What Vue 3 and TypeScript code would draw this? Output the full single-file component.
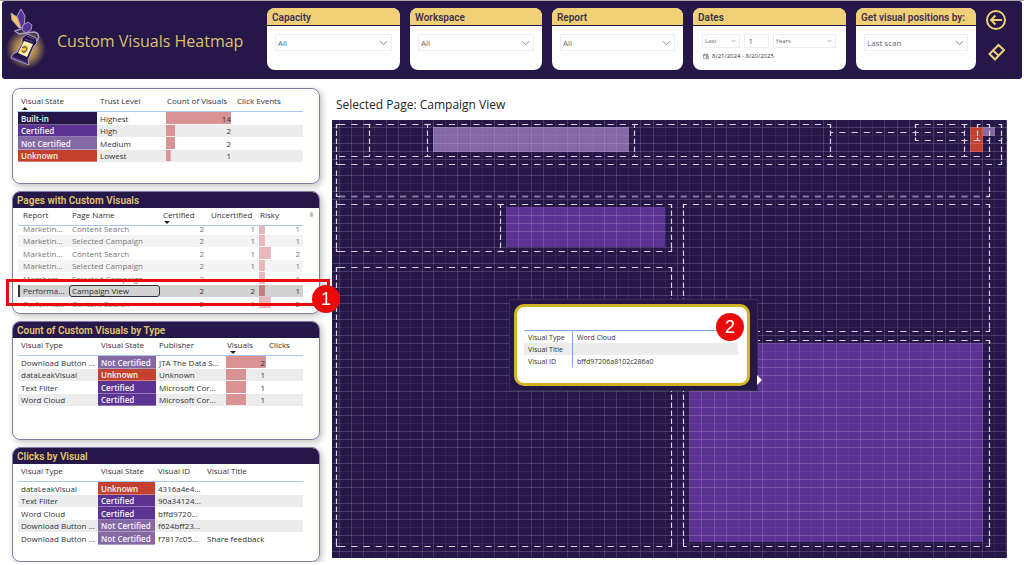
<script setup lang="ts">
import { onMounted } from 'vue'

type Kind = 'text' | 'state' | 'bar' | 'num'
interface Col { label: string; width: number; kind?: Kind; sort?: 'asc' | 'desc'; full?: number; max?: number }
interface Panel { id: string; title?: string; cols: Col[]; rows: string[][]; selected?: number }

const panels: Panel[] = [
  {
    id: 'states',
    cols: [
      { label: 'Visual State', width: 79, kind: 'state', sort: 'asc' },
      { label: 'Trust Level', width: 69 },
      { label: 'Count of Visuals', width: 68, kind: 'bar', full: 96, max: 14 },
      { label: 'Click Events', width: 69 },
    ],
    rows: [
      ['Built-in', 'Highest', '14', ''],
      ['Certified', 'High', '2', ''],
      ['Not Certified', 'Medium', '2', ''],
      ['Unknown', 'Lowest', '1', ''],
    ],
  },
  {
    id: 'pages',
    title: 'Pages with Custom Visuals',
    selected: 5,
    cols: [
      { label: 'Report', width: 51 },
      { label: 'Page Name', width: 91 },
      { label: 'Certified', width: 48, kind: 'num', sort: 'desc' },
      { label: 'Uncertified', width: 51, kind: 'num' },
      { label: 'Risky', width: 44, kind: 'bar', full: 27, max: 2 },
    ],
    rows: [
      ['Marketin...', 'Content Search', '2', '1', '1'],
      ['Marketin...', 'Selected Campaign', '2', '1', '1'],
      ['Marketin...', 'Content Search', '2', '1', '2'],
      ['Marketin...', 'Selected Campaign', '2', '1', '1'],
      ['Members ...', 'Selected Campaign', '2', '', '1'],
      ['Performa...', 'Campaign View', '2', '2', '1'],
      ['Performa...', 'Content Search', '2', '1', '2'],
    ],
  },
  {
    id: 'types',
    title: 'Count of Custom Visuals by Type',
    cols: [
      { label: 'Visual Type', width: 80 },
      { label: 'Visual State', width: 58, kind: 'state' },
      { label: 'Publisher', width: 70 },
      { label: 'Visuals', width: 40, kind: 'bar', full: 100, max: 2, sort: 'desc' },
      { label: 'Clicks', width: 37 },
    ],
    rows: [
      ['Download Button ...', 'Not Certified', 'JTA The Data S...', '2', ''],
      ['dataLeakVisual', 'Unknown', 'Unknown', '1', ''],
      ['Text Filter', 'Certified', 'Microsoft Cor...', '1', ''],
      ['Word Cloud', 'Certified', 'Microsoft Cor...', '1', ''],
    ],
  },
  {
    id: 'clicks',
    title: 'Clicks by Visual',
    cols: [
      { label: 'Visual Type', width: 80 },
      { label: 'Visual State', width: 57, kind: 'state' },
      { label: 'Visual ID', width: 49 },
      { label: 'Visual Title', width: 99 },
    ],
    rows: [
      ['dataLeakVisual', 'Unknown', '4316a4e4...', ''],
      ['Text Filter', 'Certified', '90a34124...', ''],
      ['Word Cloud', 'Certified', 'bffd9720...', ''],
      ['Download Button ...', 'Not Certified', 'f624bff23...', ''],
      ['Download Button ...', 'Not Certified', 'f7817c05...', 'Share feedback'],
    ],
  },
]

const filters = [
  { id: 'capacity', label: 'Capacity', value: 'All' },
  { id: 'workspace', label: 'Workspace', value: 'All' },
  { id: 'report', label: 'Report', value: 'All' },
]

const colWidth = (p: Panel, c: Col) => (c.width / p.cols.reduce((s, k) => s + k.width, 0)) * 100 + '%'
const slug = (s: string) => s.toLowerCase().replace(' ', '-')
const barStyle = (c: Col, v: string) =>
  c.kind === 'bar' ? { backgroundSize: `${(Number(v) / (c.max ?? 1)) * (c.full ?? 100)}% calc(100% - 1px)` } : undefined

/* Heatmap grid, in canvas units */
const vLines = Array.from({ length: 56 }, (_, i) => Math.round(i < 8 ? 7 + i * 11.8 : 101 + (i - 8) * 12.2) + 0.5)
const hLines = Array.from({ length: 54 }, (_, i) => 7.5 + i * 8)
const vDim = (i: number) => [3, 6, 9, 12, 14].includes(i % 15)
const hDim = (i: number) => [1, 5, 7].includes(i % 9)

const blocks = [
  { x: 101, y: 7, w: 196, h: 25, c: '#8469a5' },
  { x: 638, y: 7, w: 13, h: 25, c: '#c4412f' },
  { x: 651, y: 7, w: 12, h: 9, c: '#8469a5' },
  { x: 174, y: 87, w: 159, h: 40, c: '#5c3292' },
  { x: 357, y: 223, w: 294, h: 199, c: '#5c3292' },
]

/* Dashed outlines: [x1, x2, y] and [y1, y2, x] */
const hDash = [
  [5, 498, 4], [584, 632, 4], [498, 632, 12], [584, 645, 20], [5, 657, 36], [5, 669, 44],
  [5, 657, 76], [5, 339, 84], [351, 657, 84], [5, 339, 131], [5, 339, 147],
  [351, 657, 211], [351, 657, 220], [5, 339, 426], [351, 657, 426],
]
const vDash = [
  [4, 44, 4], [50, 76, 4], [4, 36, 37], [4, 36, 95], [4, 36, 302], [4, 36, 498], [4, 20, 583],
  [4, 36, 632], [4, 20, 645], [4, 36, 657], [4, 44, 669], [50, 76, 657],
  [84, 131, 4], [84, 131, 168], [84, 131, 339], [147, 426, 4], [147, 426, 339],
  [84, 211, 351], [84, 211, 657], [220, 426, 351], [220, 426, 657],
]
const corners = [
  'M4 8V4h3', 'M4 80v4m0 0h3', 'M92 4h6', 'M35 4h3', 'M495 4h3v3', 'M583 7V4h3', 'M632 7V4h3', 'M645 7V4h3',
  'M654 4h3v3', 'M666 4h3v3', 'M583 17v3h3', 'M645 17v3h3', 'M654 20h3v-3', 'M666 20h3v-3',
  'M666 44h3v-3', 'M4 41v3h3', 'M4 73v3h3', 'M657 73v3h-3', 'M339 87v-3h-3', 'M351 87v-3h3', 'M654 84h3v3',
  'M165 84h6', 'M165 131h6', 'M4 128v3h3', 'M339 128v3h-3', 'M4 150v-3h3', 'M336 147h3v3',
  'M4 423v3h3', 'M339 423v3h-3', 'M351 423v3h3', 'M657 423v3h-3', 'M657 208v3h-3', 'M654 220h3v3',
]

onMounted(() => {
  const el = document.querySelector<HTMLElement>('.scroll-pages')
  if (el) el.scrollTop = 4
})
</script>

<template>
  <div class="page">
    <header class="top">
      <div class="brand">
        <svg class="logo" viewBox="0 0 40 62" aria-hidden="true">
          <path d="M12 20 5 12 4 5l6 4 5 11z" fill="#f2c95f" stroke="#a99ccb" stroke-width="1" />
          <path d="M14 20 10 8l4-7 4 7-1 11z" fill="#5b3596" stroke="#a99ccb" stroke-width="1" />
          <path d="M16 17l5-3 4 3-1 5-5 3-4-3z" fill="#54359a" stroke="#a99ccb" stroke-width="1" />
          <path d="M14 21l-6 2 4 3 7-1M19 25l8-1c5 1 6 5 3 9" fill="none" stroke="#a99ccb" stroke-width="1.4" />
          <path d="M15 30l5-4 9 4 1 5-3 3-6 14 1 5-18-7 2-4 4-2 5-9z" fill="#251748" stroke="#a99ccb" stroke-width="1" />
          <path d="M17 33l9 3-6 13-9-4z" fill="#fff0b5" />
          <path d="M17 37l4 1-3 8-5-2z" fill="#efc145" />
          <path d="M18 31l8 3M20 28l7 3M5 49l15 6" fill="none" stroke="#5f4796" stroke-width="1.3" />
          <path d="M15 40c2-2 5-1 5 1s-3 4-5 2" fill="none" stroke="#251748" stroke-width="1" />
        </svg>
        <h1>Custom Visuals Heatmap</h1>
      </div>

      <div v-for="f in filters" :key="f.id" class="card">
        <label class="card-title" :for="f.id">{{ f.label }}</label>
        <div class="pick">
          <select :id="f.id"><option>{{ f.value }}</option></select>
          <svg viewBox="0 0 10 6" aria-hidden="true"><path d="M1 1l4 4 4-4" /></svg>
        </div>
      </div>

      <div class="card">
        <span id="dates" class="card-title">Dates</span>
        <div class="dates" role="group" aria-labelledby="dates">
          <div class="pick small">
            <select aria-label="Direction"><option>Last</option></select>
            <svg viewBox="0 0 10 6" aria-hidden="true"><path d="M1 1l4 4 4-4" /></svg>
          </div>
          <input type="text" value="1" aria-label="Amount" />
          <div class="pick small">
            <select aria-label="Unit"><option>Years</option></select>
            <svg viewBox="0 0 10 6" aria-hidden="true"><path d="M1 1l4 4 4-4" /></svg>
          </div>
        </div>
        <p class="range">
          <svg viewBox="0 0 12 12" aria-hidden="true"><path d="M4.500 10H1V2h9v3M1 4h9M3 0v2M8 0v2M6 6h5v5H6zM7 8h3" /></svg>
          8/21/2024 - 8/20/2025
        </p>
      </div>

      <div class="card">
        <label class="card-title" for="scan">Get visual positions by:</label>
        <div class="pick">
          <select id="scan"><option>Last scan</option></select>
          <svg viewBox="0 0 10 6" aria-hidden="true"><path d="M1 1l4 4 4-4" /></svg>
        </div>
      </div>

      <div class="tools">
        <button type="button" aria-label="Back">
          <svg viewBox="0 0 20 20"><circle cx="10" cy="10" r="9" /><path d="M16 10H5M9.500 5.500 5 10l4.500 4.500" /></svg>
        </button>
        <button type="button" aria-label="Clear filters">
          <svg viewBox="0 0 20 20"><path d="M12.500 3 18 8l-9 9.500L3.500 12zM7 8.500l5.500 5" /></svg>
        </button>
      </div>
    </header>

    <main class="body">
      <div class="left">
        <section v-for="p in panels" :key="p.id" class="panel-wrap" :class="p.id">
          <div class="panel">
            <h2 v-if="p.title">{{ p.title }}</h2>
            <div class="scroll" :class="'scroll-' + p.id">
              <table>
                <colgroup><col v-for="c in p.cols" :key="c.label" :style="{ width: colWidth(p, c) }" /></colgroup>
                <thead>
                  <tr><th v-for="c in p.cols" :key="c.label" scope="col" :class="[c.kind, c.sort]">{{ c.label }}</th></tr>
                </thead>
                <tbody>
                  <tr v-for="(r, i) in p.rows" :key="i" :class="{ selected: p.selected === i }">
                    <td
                      v-for="(v, j) in r"
                      :key="j"
                      :class="[p.cols[j].kind, p.cols[j].kind === 'state' ? slug(v) : '']"
                      :style="barStyle(p.cols[j], v)"
                    >{{ v }}</td>
                  </tr>
                </tbody>
              </table>
            </div>
            <span v-if="p.id === 'pages'" class="thumb"></span>
          </div>
          <div v-if="p.id === 'pages'" class="callout"><span class="badge">1</span></div>
        </section>
      </div>

      <section class="right">
        <h2 class="selected-page">Selected Page: Campaign View</h2>
        <div class="map">
          <svg class="canvas" viewBox="0 0 675 438" role="img" aria-label="Visual positions">
            <rect width="675" height="438" fill="#251748" />
            <rect v-for="(b, i) in blocks" :key="'b' + i" :x="b.x" :y="b.y" :width="b.w" :height="b.h" :fill="b.c" />
            <g stroke="#c9bfdc" stroke-width="1">
              <line v-for="(x, i) in vLines" :key="'v' + i" :x1="x" :x2="x" y1="0" y2="438" :stroke-opacity="vDim(i) ? 0.08 : 0.2" />
              <line v-for="(y, i) in hLines" :key="'h' + i" x1="0" x2="675" :y1="y" :y2="y" :stroke-opacity="hDim(i) ? 0.08 : 0.22" />
            </g>
            <g transform="translate(.5 .5)" fill="none" stroke="#d6d1df" stroke-width="1.200">
              <path
                v-for="(d, i) in hDash"
                :key="'hd' + i"
                :d="`M${d[0]} ${d[2]}H${d[1]}`"
                stroke-dasharray="6.2 6"
                :stroke-dashoffset="d[0] - 6.6"
                :class="{ soft: d[2] === 76 }"
              />
              <path v-for="(d, i) in vDash" :key="'vd' + i" :d="`M${d[2]} ${d[0]}V${d[1]}`" stroke-dasharray="5.5 2.5" :stroke-dashoffset="d[0] - 2" />
              <path v-for="(d, i) in corners" :key="'c' + i" :d="d" />
            </g>
          </svg>
          <div class="tip">
            <div class="tip-card">
              <table>
                <tbody>
                  <tr><th scope="row">Visual Type</th><td>Word Cloud</td></tr>
                  <tr><th scope="row">Visual Title</th><td></td></tr>
                  <tr><th scope="row">Visual ID</th><td>bffd97206a8102c286a0</td></tr>
                </tbody>
              </table>
            </div>
            <span class="badge">2</span>
          </div>
        </div>
      </section>
    </main>
  </div>
</template>

<style>
body { background: #fff; }
</style>

<style scoped>
* { box-sizing: border-box; }
.page {
  font-family: "Open Sans", "Noto Sans", sans-serif;
  font-size: 8px;
  line-height: 12px;
  color: #333;
  border-top: 1px solid #a9a7ae;
}
h1, h2, p { margin: 0; font-weight: 400; }

.top {
  display: grid;
  grid-template-columns: minmax(0, 255fr) minmax(0, 133fr) minmax(0, 132fr) minmax(0, 131fr) minmax(0, 153fr) minmax(0, 120fr) minmax(0, 36fr);
  gap: 10px;
  margin: 0 2px;
  padding: 7px 0 9px;
  background: #251748;
  border-radius: 3px;
}
.brand { display: flex; align-items: center; gap: 10px; padding-left: 5px; }
.logo {
  flex: none;
  width: 40px;
  height: 62px;
  background: radial-gradient(circle at 19px 41px, #f0c566 0, #a98450 10px, rgba(37, 23, 72, 0) 20px);
}
.brand h1 { font-size: 16px; line-height: 24px; color: #dcc06f; white-space: nowrap; padding-top: 4px; }

.card { min-height: 62px; min-width: 0; background: #fff; border-radius: 8px; overflow: hidden; }
.card-title {
  display: block;
  height: 18px;
  padding-left: 5px;
  line-height: 19px;
  background: #efd077;
  border-bottom: 1px solid #251748;
  font-family: Roboto, sans-serif;
  font-weight: 600;
  font-size: 10px;
  color: #44304f;
  white-space: nowrap;
}
.pick { position: relative; height: 17px; margin: 8px 8px 0; border: 1px solid #eee; }
.pick select {
  appearance: none;
  width: 100%;
  height: 100%;
  padding: 0 2px;
  border: 0;
  background: none;
  font: inherit;
  color: #666;
}
.pick svg { position: absolute; right: 3px; top: 5px; width: 9px; height: 6px; fill: none; stroke: #777; stroke-width: 1; pointer-events: none; }
.dates { display: grid; grid-template-columns: 38fr 25fr 64fr; gap: 4px; margin: 8px 10px 0 9px; }
.pick.small { height: 14px; margin: 0; font-size: 6px; }
.pick.small svg { width: 5px; height: 4px; top: 4px; }
.dates input { width: 100%; min-width: 0; height: 14px; padding: 0 4px; border: 1px solid #eee; font: inherit; font-size: 7px; color: #444; }
.range { display: flex; align-items: center; gap: 3px; padding: 3px 0 0 10px; font-size: 6px; line-height: 10px; white-space: nowrap; }
.range svg { width: 6px; height: 7px; fill: none; stroke: #555; stroke-width: 1; }
.tools { display: flex; flex-direction: column; align-items: flex-start; gap: 12px; padding-top: 2px; }
.tools button { width: 20px; height: 20px; padding: 0; border: 0; background: none; }
.tools svg { display: block; width: 20px; height: 20px; fill: none; stroke: #efd077; stroke-width: 2; }

.body { display: grid; grid-template-columns: 308fr 675fr; gap: 12px; padding: 9px 17px 0 12px; }
.left { display: flex; flex-direction: column; gap: 7px; min-width: 0; }
.panel-wrap { position: relative; border-radius: 8px; box-shadow: 2px 2px 6px rgba(0, 0, 0, 0.25); }
.panel {
  position: relative;
  border: 1px solid #8479a5;
  border-radius: 8px;
  overflow: hidden;
  background: #fff;
  height: 100%;
}
.states { height: 96px; }
.pages { height: 123px; }
.types { height: 119px; }
.clicks { height: 115px; }
.panel h2 {
  height: 16px;
  padding-left: 4px;
  line-height: 17px;
  background: #251748;
  font-family: Roboto, sans-serif;
  font-weight: 600;
  font-size: 10px;
  color: #e2c46c;
}
.scroll { margin: 0 16px 0 5px; overflow: hidden; }
.scroll-states { margin-top: 5px; }
.scroll-pages { height: 100px; }
.thumb { position: absolute; right: 6px; top: 20px; width: 3px; height: 5px; border-radius: 2px; background: #bbb; }

table { width: 100%; table-layout: fixed; border-collapse: separate; border-spacing: 0; }
.scroll th {
  position: sticky;
  top: 0;
  z-index: 1;
  height: 18px;
  padding: 0 0 4px 3px;
  text-align: left;
  font-weight: 400;
  line-height: 13px;
  white-space: nowrap;
  background: #fff;
  border-bottom: 1px solid #a9c6f5;
}
.scroll th.bar { padding-left: 1px; }
.scroll th.asc::after, .scroll th.desc::after {
  content: "";
  position: absolute;
  left: 4px;
  bottom: 1px;
  border: 3px solid transparent;
}
.scroll th.asc::after { border-bottom-color: #222; border-top: 0; }
.scroll th.desc::after { border-top-color: #222; border-bottom: 0; }
.scroll td { height: 13px; padding: 0 0 0 3px; line-height: 12px; white-space: nowrap; overflow: hidden; }
.scroll tr:nth-child(even) td { height: 12px; }
.scroll tbody tr:nth-child(even) { background: #ececec; }
.scroll td.num { text-align: right; padding-right: 4px; }
.scroll td.bar {
  text-align: right;
  padding-right: 3px;
  background-image: linear-gradient(#d99395, #d99395);
  background-repeat: no-repeat;
}
.types .scroll td.bar { padding-right: 1px; }
.scroll td.state { font-weight: 600; color: #f6f3fa; border-bottom: 1px solid rgba(255, 255, 255, 0.35); line-height: 11px; }
.built-in { background: #251748; }
.certified { background: #5c3292; }
.not-certified { background: #8469a5; }
.unknown { background: #c4412f; }
.pages tbody { color: #777; }
.pages .scroll th:first-child, .pages .scroll td:first-child { padding-left: 5px; }
.pages .scroll tbody tr:nth-child(even) { background: #f4f4f4; }
.pages .scroll td.bar { background-image: linear-gradient(#eab8ba, #eab8ba); }
.pages .scroll tbody tr.selected { background: #d2d2d2; color: #333; }
.pages .scroll tr.selected td.bar { background-image: linear-gradient(#c27d7f, #c27d7f); }
.pages .scroll tr.selected td:first-child { box-shadow: inset 2px 0 #333; }
.pages .scroll tr.selected td:nth-child(2) { border: 1px solid #333; border-radius: 3px; padding-left: 2px; line-height: 10px; }

.callout { position: absolute; z-index: 2; left: -6px; right: -10px; top: 88px; height: 27px; border: 3px solid #ea0a0a; }
.badge {
  position: absolute;
  width: 28px;
  height: 28px;
  border-radius: 50%;
  background: #ea0a0a;
  color: #fff;
  font: 18px/28px "Liberation Sans", Arial, sans-serif;
  text-align: center;
}
.callout .badge { right: -13px; top: 3px; }

.right { min-width: 0; }
.selected-page { padding: 8px 0 6px 4px; font-size: 12px; line-height: 18px; color: #252423; }
.map { position: relative; }
.canvas { display: block; width: 100%; }
.soft { stroke-width: 2; stroke-opacity: 0.55; }
.tip { position: absolute; left: 177px; top: 179px; width: 249px; padding: 4px 7px 4px 4px; background: #251748; border: 1px solid #35304a; }
.tip::after { content: ""; position: absolute; left: 100%; top: 75px; border: 5px solid transparent; border-left-color: #fff; border-right: 0; }
.tip-card { min-height: 82px; padding: 23px 9px 0 7px; border: 3px solid #d4b323; border-radius: 10px; background: #fff; }
.tip table { border-top: 1px solid #7aaaf0; font-size: 7px; }
.tip th { width: 49px; height: 12px; padding: 0 0 0 4px; text-align: left; font-weight: 400; border-right: 1px solid #7aaaf0; line-height: 11px; white-space: nowrap; }
.tip td { padding: 0 0 0 4px; line-height: 11px; }
.tip tr:nth-child(2) { background: #ececec; }
.tip .badge { right: 13px; top: 13px; }
</style>
